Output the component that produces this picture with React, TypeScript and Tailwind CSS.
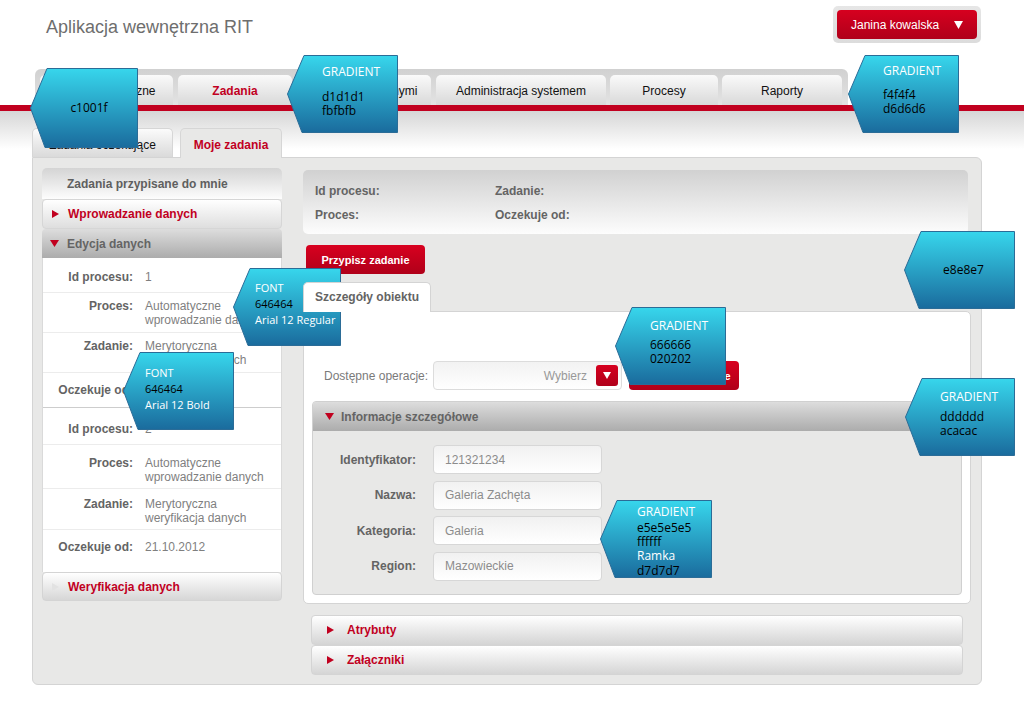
import React from 'react';

function TriRight({ color = '#c1001f' }: { color?: string }) {
  return (
    <svg width="7" height="8" viewBox="0 0 7 8" className="shrink-0">
      <path d="M0 0 L7 4 L0 8 Z" fill={color} />
    </svg>
  );
}

function TriDown({ color = '#c1001f' }: { color?: string }) {
  return (
    <svg width="9" height="7" viewBox="0 0 9 7" className="shrink-0">
      <path d="M0 0 H9 L4.5 7 Z" fill={color} />
    </svg>
  );
}

function Callout({
  pos,
  w,
  h,
  id,
  children,
}: {
  pos: string;
  w: number;
  h: number;
  id: string;
  children: React.ReactNode;
}) {
  return (
    <div className={`absolute ${pos} font-['Open_Sans','Noto_Sans',sans-serif] text-[11px] leading-[14px]`}>
      <svg width={w} height={h} className="absolute left-0 top-0">
        <defs>
          <linearGradient id={id} x1="0" y1="0" x2="0" y2="1">
            <stop offset="0" stopColor="#37d6ec" />
            <stop offset="1" stopColor="#1a6b9d" />
          </linearGradient>
        </defs>
        <path
          d={`M17 0.5 H${w - 0.5} V${h - 0.5} H15 L0.5 ${h / 2} Z`}
          fill={`url(#${id})`}
          stroke="#2b6c97"
          strokeWidth="1"
          strokeLinejoin="round"
        />
      </svg>
      <div className="relative h-full w-full">{children}</div>
    </div>
  );
}

function KV({ label, value, h, sep, pt }: { label: string; value: React.ReactNode; h: string; sep: string; pt: string }) {
  return (
    <div className={`flex items-start ${h} ${sep} ${pt}`}>
      <div className="w-[90px] shrink-0 text-right font-bold text-[#646464]">{label}</div>
      <div className="ml-[12px] w-[128px] text-[#7f7f7f]">{value}</div>
    </div>
  );
}

function FormRow({ label, value }: { label: string; value: string }) {
  return (
    <div className="flex items-center">
      <div className="w-[103px] text-right font-bold text-[#646464]">{label}</div>
      <div className="ml-[17px] flex h-[29px] w-[169px] items-center rounded-[4px] border border-[#d7d7d7] bg-linear-to-b from-[#f1f1f1] to-white pl-[11px] text-[#8c8c8c]">
        {value}
      </div>
    </div>
  );
}

export default function App() {
  const tabs = [
    { t: 'Dane statystyczne', w: 'w-[133px]' },
    { t: 'Zadania', w: 'w-[114px]', active: true },
    { t: 'Zarządzanie danymi', w: 'w-[135px]' },
    { t: 'Administracja systemem', w: 'w-[170px]' },
    { t: 'Procesy', w: 'w-[108px]' },
    { t: 'Raporty', w: 'w-[120px]' },
  ];
  const tabGaps = ['', 'ml-[5px]', 'ml-[4px]', 'ml-[5px]', 'ml-[4px]', 'ml-[4px]'];

  return (
    <div className="relative h-[707px] w-[1024px] overflow-hidden bg-white font-['Liberation_Sans',Arial,sans-serif] text-[12px] leading-[14px]">
      {/* Header */}
      <div className="flex h-[69px] items-start">
        <div className="ml-[46px] mt-[16px] text-[18px] leading-[22px] text-[#6e6e6e]">Aplikacja wewnętrzna RIT</div>
        <div className="ml-auto mr-[43px] mt-[6px] rounded-[5px] bg-linear-to-b from-[#e6e6e6] to-[#dcdcdc] p-[4px]">
          <div className="flex h-[29px] w-[140px] items-center rounded-[4px] bg-linear-to-b from-[#d6001f] to-[#b0001a] pl-[14px] pr-[14px] text-white">
            <span>Janina kowalska</span>
            <svg width="9" height="8" viewBox="0 0 9 8" className="ml-auto">
              <path d="M0 0 H9 L4.5 8 Z" fill="#fff" />
            </svg>
          </div>
        </div>
      </div>

      {/* Main tabs */}
      <div className="flex pl-[35px]">
        <div className="flex h-[36px] w-[813px] items-end rounded-t-[6px] bg-linear-to-b from-[#d1d1d1] to-[#e3e3e3] pl-[5px]">
          {tabs.map((tb, i) => (
            <div
              key={tb.t}
              className={`${tb.w} ${tabGaps[i]} flex h-[30px] items-center justify-center rounded-t-[5px] bg-linear-to-b from-[#fafafa] to-[#d9d9d9] pt-px ${
                tb.active ? 'font-bold text-[#c1001f]' : 'text-[#111]'
              }`}
            >
              {tb.t}
            </div>
          ))}
        </div>
      </div>
      <div className="h-[6px] bg-[#c1001f]" />

      {/* Content area */}
      <div className="bg-[linear-gradient(to_bottom,#d6d6d6_0px,#ffffff_38px)] pt-[17px]">
        {/* Sub tabs */}
        <div className="flex pl-[32px]">
          <div className="flex h-[29px] w-[141px] items-center justify-center rounded-t-[5px] border border-b-0 border-[#d6d6d6] bg-linear-to-b from-[#fbfbfb] to-[#dadada] pt-[3px] text-[#111]">
            Zadania oczekujące
          </div>
          <div className="relative z-10 -mb-px ml-[7px] flex h-[30px] w-[102px] items-center justify-center rounded-t-[5px] border border-b-0 border-[#d6d6d6] bg-[#e8e8e7] pt-[3px] font-bold text-[#c1001f]">
            Moje zadania
          </div>
        </div>

        {/* Main panel */}
        <div className="ml-[32px] flex h-[528px] w-[950px] rounded-b-[6px] rounded-tr-[6px] border border-[#d4d4d4] bg-[#e8e8e7] pl-[9px] pt-[10px]">
          {/* Left column */}
          <div className="flex w-[240px] flex-col">
            <div className="flex h-[31px] items-center rounded-t-[5px] bg-linear-to-b from-[#d4d4d4] to-[#fdfdfd] pl-[25px] font-bold text-[#5f5f5f]">
              Zadania przypisane do mnie
            </div>
            <div className="flex h-[30px] items-center rounded-[4px] border border-[#d6d6d6] bg-linear-to-b from-[#ffffff] to-[#dedede] pl-[9px]">
              <TriRight />
              <span className="ml-[9px] font-bold text-[#c1001f]">Wprowadzanie danych</span>
            </div>
            <div className="flex h-[29px] items-center rounded-t-[4px] bg-linear-to-b from-[#dddddd] to-[#acacac] pl-[8px]">
              <TriDown />
              <span className="ml-[8px] font-bold text-[#646464]">Edycja danych</span>
            </div>
            <div className="flex flex-col border-x border-[#dadada] bg-white">
              <KV label="Id procesu:" value="1" h="h-[35px]" pt="pt-[12px]" sep="border-b border-[#ececec]" />
              <KV label="Proces:" value={<>Automatyczne<br />wprowadzanie danych</>} h="h-[40px]" pt="pt-[6px]" sep="border-b border-[#ececec]" />
              <KV label="Zadanie:" value={<>Merytoryczna<br />weryfikacja danych</>} h="h-[40px]" pt="pt-[6px]" sep="border-b border-[#ececec]" />
              <KV label="Oczekuje od:" value="21.10.2012" h="h-[35px]" pt="pt-[10px]" sep="border-b border-[#cdcdcd]" />
              <KV label="Id procesu:" value="2" h="h-[37px]" pt="pt-[14px]" sep="border-b border-[#ececec]" />
              <KV label="Proces:" value={<>Automatyczne<br />wprowadzanie danych</>} h="h-[44px]" pt="pt-[11px]" sep="border-b border-[#ececec]" />
              <KV label="Zadanie:" value={<>Merytoryczna<br />weryfikacja danych</>} h="h-[41px]" pt="pt-[8px]" sep="border-b border-[#ececec]" />
              <KV label="Oczekuje od:" value="21.10.2012" h="h-[42px]" pt="pt-[10px]" sep="" />
            </div>
            <div className="flex h-[29px] items-center rounded-[4px] border border-[#d4d4d4] bg-linear-to-b from-[#ffffff] to-[#d6d6d6] pl-[9px]">
              <TriRight color="#e2e2e2" />
              <span className="ml-[9px] font-bold text-[#c1001f]">Weryfikacja danych</span>
            </div>
          </div>

          {/* Right column */}
          <div className="ml-[21px] flex w-[668px] flex-col pt-[2px]">
            <div className="grid h-[64px] w-[665px] grid-cols-[180px_1fr] content-start gap-y-[10px] rounded-[5px] bg-linear-to-b from-[#d1d1d1] to-[#fdfdfd] px-[12px] pt-[14px] font-bold text-[#646464]">
              <div>Id procesu:</div>
              <div>Zadanie:</div>
              <div>Proces:</div>
              <div>Oczekuje od:</div>
            </div>
            <div className="ml-[3px] mt-[11px] flex h-[29px] w-[119px] items-center justify-center rounded-[4px] bg-linear-to-b from-[#d8001f] to-[#b00019] text-[11px] font-bold text-white">
              Przypisz zadanie
            </div>
            <div className="relative z-10 -mb-px mt-[8px] flex h-[30px] w-[128px] items-center justify-center rounded-t-[5px] border border-b-0 border-[#d4d4d4] bg-white pb-px font-bold text-[#646464]">
              Szczegóły obiektu
            </div>
            <div className="flex h-[293px] flex-col rounded-b-[5px] rounded-tr-[5px] border border-[#d4d4d4] bg-white px-[8px] pt-[49px]">
              <div className="flex h-[29px] items-center pl-[12px]">
                <div className="w-[109px] text-[#7a7a7a]">Dostępne operacje:</div>
                <div className="flex h-[29px] w-[189px] items-center rounded-[4px] border border-[#dcdcdc] bg-linear-to-b from-[#f2f2f2] to-white pr-[3px]">
                  <span className="ml-auto text-[#999]">Wybierz</span>
                  <div className="ml-[9px] flex h-[21px] w-[22px] items-center justify-center rounded-[3px] bg-linear-to-b from-[#d6001f] to-[#b0001a]">
                    <svg width="8" height="7" viewBox="0 0 8 7">
                      <path d="M0 0 H8 L4 7 Z" fill="#fff" />
                    </svg>
                  </div>
                </div>
                <div className="ml-[7px] flex h-[29px] w-[110px] items-center justify-center rounded-[4px] bg-linear-to-b from-[#d8001f] to-[#b00019] text-[11px] font-bold text-white">
                  Wykonaj operacje
                </div>
              </div>
              <div className="mt-[11px] flex flex-col overflow-hidden rounded-[4px] border border-[#d0d0d0] bg-[#e8e8e7]">
                <div className="flex h-[29px] shrink-0 items-center bg-linear-to-b from-[#dddddd] to-[#acacac] pl-[12px]">
                  <TriDown />
                  <span className="ml-[7px] font-bold text-[#646464]">Informacje szczegółowe</span>
                </div>
                <div className="flex flex-col gap-[6.5px] pb-[13px] pt-[14px]">
                  <FormRow label="Identyfikator:" value="121321234" />
                  <FormRow label="Nazwa:" value="Galeria Zachęta" />
                  <FormRow label="Kategoria:" value="Galeria" />
                  <FormRow label="Region:" value="Mazowieckie" />
                </div>
              </div>
            </div>
            <div className="mx-[8px] mt-[11px] flex h-[30px] items-center rounded-[4px] border border-[#d4d4d4] bg-linear-to-b from-[#ffffff] to-[#d5d5d5] pl-[15px]">
              <TriRight />
              <span className="ml-[13px] font-bold text-[#c1001f]">Atrybuty</span>
            </div>
            <div className="mx-[8px] flex h-[30px] items-center rounded-[4px] border border-[#d4d4d4] bg-linear-to-b from-[#ffffff] to-[#d5d5d5] pl-[15px]">
              <TriRight />
              <span className="ml-[13px] font-bold text-[#c1001f]">Załączniki</span>
            </div>
          </div>
        </div>
      </div>

      {/* Annotation callouts */}
      <Callout pos="left-[30px] top-[68px] w-[108px] h-[80px]" w={108} h={80} id="g1">
        <div className="flex h-full items-center justify-center pl-[10px] text-[12px] text-black">c1001f</div>
      </Callout>
      <Callout pos="left-[287px] top-[55px] w-[111px] h-[78px]" w={111} h={78} id="g2">
        <div className="pl-[35px] pt-[10px]">
          <div className="text-[12px] text-white">GRADIENT</div>
          <div className="mt-[11px] text-[12px] text-black">d1d1d1</div>
          <div className="text-[12px] text-black">fbfbfb</div>
        </div>
      </Callout>
      <Callout pos="left-[848px] top-[55px] w-[111px] h-[78px]" w={111} h={78} id="g3">
        <div className="pl-[35px] pt-[9px]">
          <div className="text-[12px] text-white">GRADIENT</div>
          <div className="mt-[10px] text-[12px] text-black">f4f4f4</div>
          <div className="text-[12px] text-black">d6d6d6</div>
        </div>
      </Callout>
      <Callout pos="left-[904px] top-[231px] w-[111px] h-[78px]" w={111} h={78} id="g4">
        <div className="flex h-full items-center justify-center pl-[8px] text-[12px] text-black">e8e8e7</div>
      </Callout>
      <Callout pos="left-[233px] top-[268px] w-[108px] h-[78px]" w={108} h={78} id="g5">
        <div className="pl-[22px] pt-[13px]">
          <div className="text-white">FONT</div>
          <div className="mt-[2px] text-black">646464</div>
          <div className="mt-[2px] text-white">Arial 12 Regular</div>
        </div>
      </Callout>
      <Callout pos="left-[123px] top-[352px] w-[111px] h-[78px]" w={111} h={78} id="g6">
        <div className="pl-[22px] pt-[14px]">
          <div className="text-white">FONT</div>
          <div className="mt-[2px] text-black">646464</div>
          <div className="mt-[2px] text-white">Arial 12 Bold</div>
        </div>
      </Callout>
      <Callout pos="left-[615px] top-[307px] w-[111px] h-[78px]" w={111} h={78} id="g7">
        <div className="pl-[35px] pt-[12px]">
          <div className="text-[12px] text-white">GRADIENT</div>
          <div className="mt-[5px] text-[12px] text-black">666666</div>
          <div className="text-[12px] text-black">020202</div>
        </div>
      </Callout>
      <Callout pos="left-[905px] top-[378px] w-[110px] h-[78px]" w={110} h={78} id="g8">
        <div className="pl-[35px] pt-[12px]">
          <div className="text-[12px] text-white">GRADIENT</div>
          <div className="mt-[6px] text-[12px] text-black">dddddd</div>
          <div className="text-[12px] text-black">acacac</div>
        </div>
      </Callout>
      <Callout pos="left-[600px] top-[500px] w-[112px] h-[78px]" w={112} h={78} id="g9">
        <div className="pl-[37px] pt-[5px]">
          <div className="text-[12px] text-white">GRADIENT</div>
          <div className="mt-[2px] text-[12px] text-black">e5e5e5e5</div>
          <div className="text-[12px] text-black">ffffff</div>
          <div className="text-[12px] text-white">Ramka</div>
          <div className="mt-[1px] text-[12px] text-black">d7d7d7</div>
        </div>
      </Callout>
    </div>
  );
}
